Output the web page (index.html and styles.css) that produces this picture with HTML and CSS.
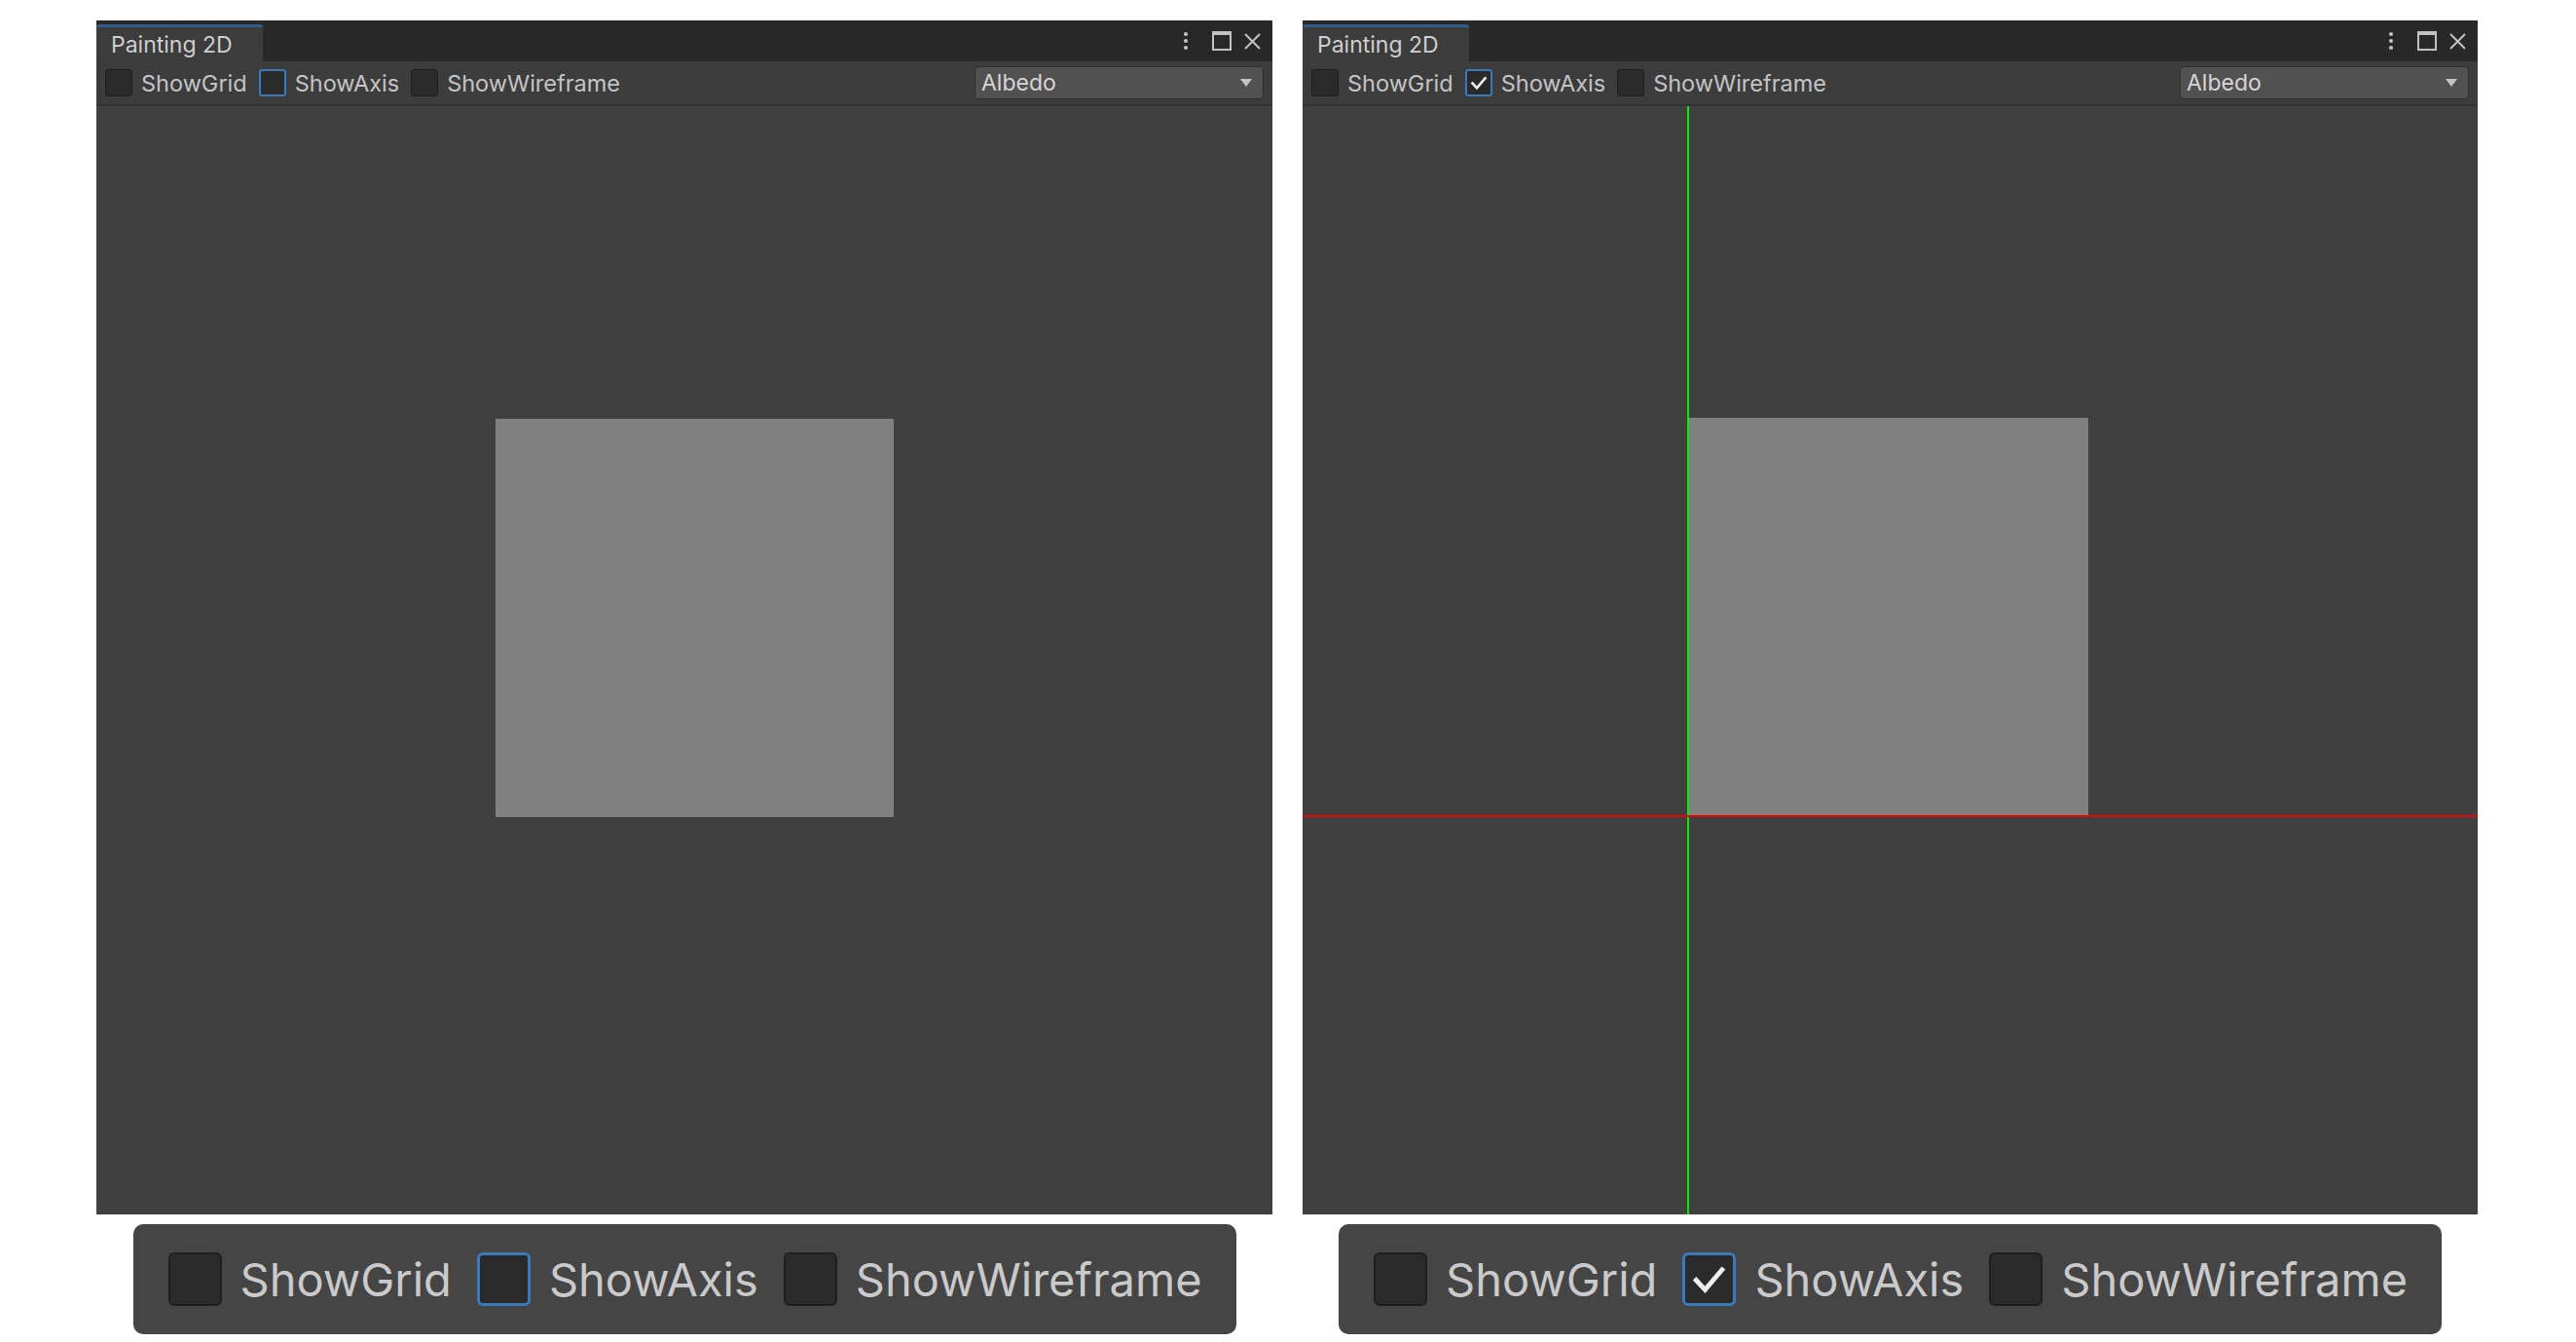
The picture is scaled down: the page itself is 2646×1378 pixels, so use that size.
FILE: index.html
```html
<!DOCTYPE html>
<html lang="en">
<head>
<meta charset="utf-8">
<title>Painting 2D</title>
<link rel="stylesheet" href="styles.css">
</head>
<body>
<main class="page">
  <section class="column column--left">
    <div class="window">
      <div class="titlebar">
        <div class="tab">Painting 2D</div>
        <div class="win-actions">
          <svg class="icon icon--kebab" viewBox="0 0 6 20" width="6" height="20"><circle cx="3" cy="3" r="2.1"/><circle cx="3" cy="10" r="2.1"/><circle cx="3" cy="17" r="2.1"/></svg>
          <svg class="icon icon--max" viewBox="0 0 20 20" width="20" height="20"><path fill-rule="evenodd" d="M0 0h20v20H0z M2 4h16v14H2z"/></svg>
          <svg class="icon icon--close" viewBox="0 0 17 17" width="17" height="17"><path d="M1 1L16 16M16 1L1 16"/></svg>
        </div>
      </div>
      <div class="toolbar">
        <label class="toggle"><span class="box"></span><span class="label">ShowGrid</span></label>
        <label class="toggle"><span class="box box--focus"></span><span class="label">ShowAxis</span></label>
        <label class="toggle"><span class="box"></span><span class="label">ShowWireframe</span></label>
        <div class="dropdown"><span class="dropdown__value">Albedo</span><svg class="dropdown__arrow" viewBox="0 0 12 8" width="12" height="8"><path d="M0 0h12L6 8z"/></svg></div>
      </div>
      <div class="viewport">
        <div class="quad quad--left"></div>
      </div>
    </div>
    <div class="panel">
      <label class="toggle toggle--lg"><span class="box box--lg"></span><span class="label">ShowGrid</span></label>
      <label class="toggle toggle--lg"><span class="box box--lg box--focus-lg"></span><span class="label">ShowAxis</span></label>
      <label class="toggle toggle--lg"><span class="box box--lg"></span><span class="label">ShowWireframe</span></label>
    </div>
  </section>

  <section class="column column--right">
    <div class="window">
      <div class="titlebar">
        <div class="tab">Painting 2D</div>
        <div class="win-actions">
          <svg class="icon icon--kebab" viewBox="0 0 6 20" width="6" height="20"><circle cx="3" cy="3" r="2.1"/><circle cx="3" cy="10" r="2.1"/><circle cx="3" cy="17" r="2.1"/></svg>
          <svg class="icon icon--max" viewBox="0 0 20 20" width="20" height="20"><path fill-rule="evenodd" d="M0 0h20v20H0z M2 4h16v14H2z"/></svg>
          <svg class="icon icon--close" viewBox="0 0 17 17" width="17" height="17"><path d="M1 1L16 16M16 1L1 16"/></svg>
        </div>
      </div>
      <div class="toolbar">
        <label class="toggle"><span class="box"></span><span class="label">ShowGrid</span></label>
        <label class="toggle"><span class="box box--focus"><svg class="check" viewBox="0 0 24 24"><path d="M5.5 12.5l4.5 4.8 8.5-10"/></svg></span><span class="label">ShowAxis</span></label>
        <label class="toggle"><span class="box"></span><span class="label">ShowWireframe</span></label>
        <div class="dropdown"><span class="dropdown__value">Albedo</span><svg class="dropdown__arrow" viewBox="0 0 12 8" width="12" height="8"><path d="M0 0h12L6 8z"/></svg></div>
      </div>
      <div class="viewport">
        <div class="quad quad--right"></div>
        <div class="axis axis--y"></div>
        <div class="axis axis--x"></div>
      </div>
    </div>
    <div class="panel">
      <label class="toggle toggle--lg"><span class="box box--lg"></span><span class="label">ShowGrid</span></label>
      <label class="toggle toggle--lg"><span class="box box--lg box--focus-lg"><svg class="check" viewBox="0 0 24 24"><path d="M5.5 12.5l4.5 4.8 8.5-10"/></svg></span><span class="label">ShowAxis</span></label>
      <label class="toggle toggle--lg"><span class="box box--lg"></span><span class="label">ShowWireframe</span></label>
    </div>
  </section>
</main>
</body>
</html>
```

FILE: styles.css
```css
html, body {
  margin: 0;
  background: #ffffff;
}

body {
  font-family: Inter, "Noto Sans", "Liberation Sans", sans-serif;
  color: #c4c4c4;
}

.page {
  display: flex;
  align-items: flex-start;
  gap: 31px;
  padding: 21px 0 0 99px;
}

.column {
  display: flex;
  flex-direction: column;
  align-items: center;
}

.column--left { width: 1208px; }
.column--right { width: 1207px; }

.window {
  width: 100%;
  height: 1226px;
  display: flex;
  flex-direction: column;
  background: #404040;
}

.titlebar {
  height: 42px;
  flex: none;
  display: flex;
  align-items: flex-end;
  background: #282828;
}

.tab {
  box-sizing: border-box;
  width: 171px;
  height: 38px;
  padding-left: 15px;
  display: flex;
  align-items: center;
  background: #3c3c3c;
  border-top: 3px solid #2f5d8c;
  border-radius: 3px 3px 0 0;
  font-size: 23px;
  color: #cfcfcf;
  white-space: nowrap;
}

.win-actions {
  margin-left: auto;
  align-self: center;
  display: flex;
  align-items: center;
  padding-right: 12px;
}

.icon { display: block; fill: #c2c2c2; }
.icon--kebab { margin-right: 24px; }
.icon--max { margin-right: 13px; }
.icon--close { fill: none; stroke: #c2c2c2; stroke-width: 2; }

.toolbar {
  height: 44px;
  flex: none;
  display: flex;
  align-items: center;
  padding: 0 9px;
  background: #3c3c3c;
  border-bottom: 2px solid #323232;
}

.toggle {
  display: flex;
  align-items: center;
  gap: 9px;
  margin-right: 12px;
  font-size: 23.5px;
  color: #c4c4c4;
  white-space: nowrap;
}

.box {
  box-sizing: border-box;
  width: 28px;
  height: 28px;
  flex: none;
  display: flex;
  align-items: center;
  justify-content: center;
  background: #2a2a2a;
  border: 1px solid #1e1e1e;
  border-radius: 3px;
}

.box--focus { border: 2px solid #3a79bb; }

.check {
  width: 100%;
  height: 100%;
  fill: none;
  stroke: #eeeeee;
  stroke-width: 2.6;
  stroke-linecap: square;
}

.dropdown {
  box-sizing: border-box;
  margin-left: auto;
  width: 297px;
  height: 34px;
  display: flex;
  align-items: center;
  padding: 0 11px 0 6px;
  background: #515151;
  border: 1px solid #2e2e2e;
  border-radius: 4px;
  font-size: 23px;
  color: #d6d6d6;
}

.dropdown__arrow {
  margin-left: auto;
  fill: #c4c4c4;
}

.viewport {
  flex: 1;
  position: relative;
  overflow: hidden;
  background: #404040;
}

.quad {
  position: absolute;
  width: 409px;
  height: 409px;
  background: #808080;
}

.quad--left { left: 410px; top: 321px; }
.quad--right { left: 397px; top: 320px; width: 410px; }

.axis { position: absolute; }
.axis--y { left: 395px; top: 0; bottom: 0; width: 2px; background: #00f000; }
.axis--x { left: 0; right: 0; top: 728px; height: 2px; background: #f00000; }

.panel {
  box-sizing: border-box;
  width: 1133px;
  height: 113px;
  margin-top: 10px;
  display: flex;
  align-items: center;
  padding-left: 36px;
  background: #454545;
  border-radius: 10px;
}

.toggle--lg {
  gap: 19px;
  margin-right: 26px;
  font-size: 47px;
  color: #cacaca;
}

.box--lg {
  width: 55px;
  height: 55px;
  border: 2px solid #1e1e1e;
  border-radius: 6px;
}

.box--focus-lg { border: 3px solid #3a79bb; }

.box--lg .check { stroke-width: 2.4; }
```
